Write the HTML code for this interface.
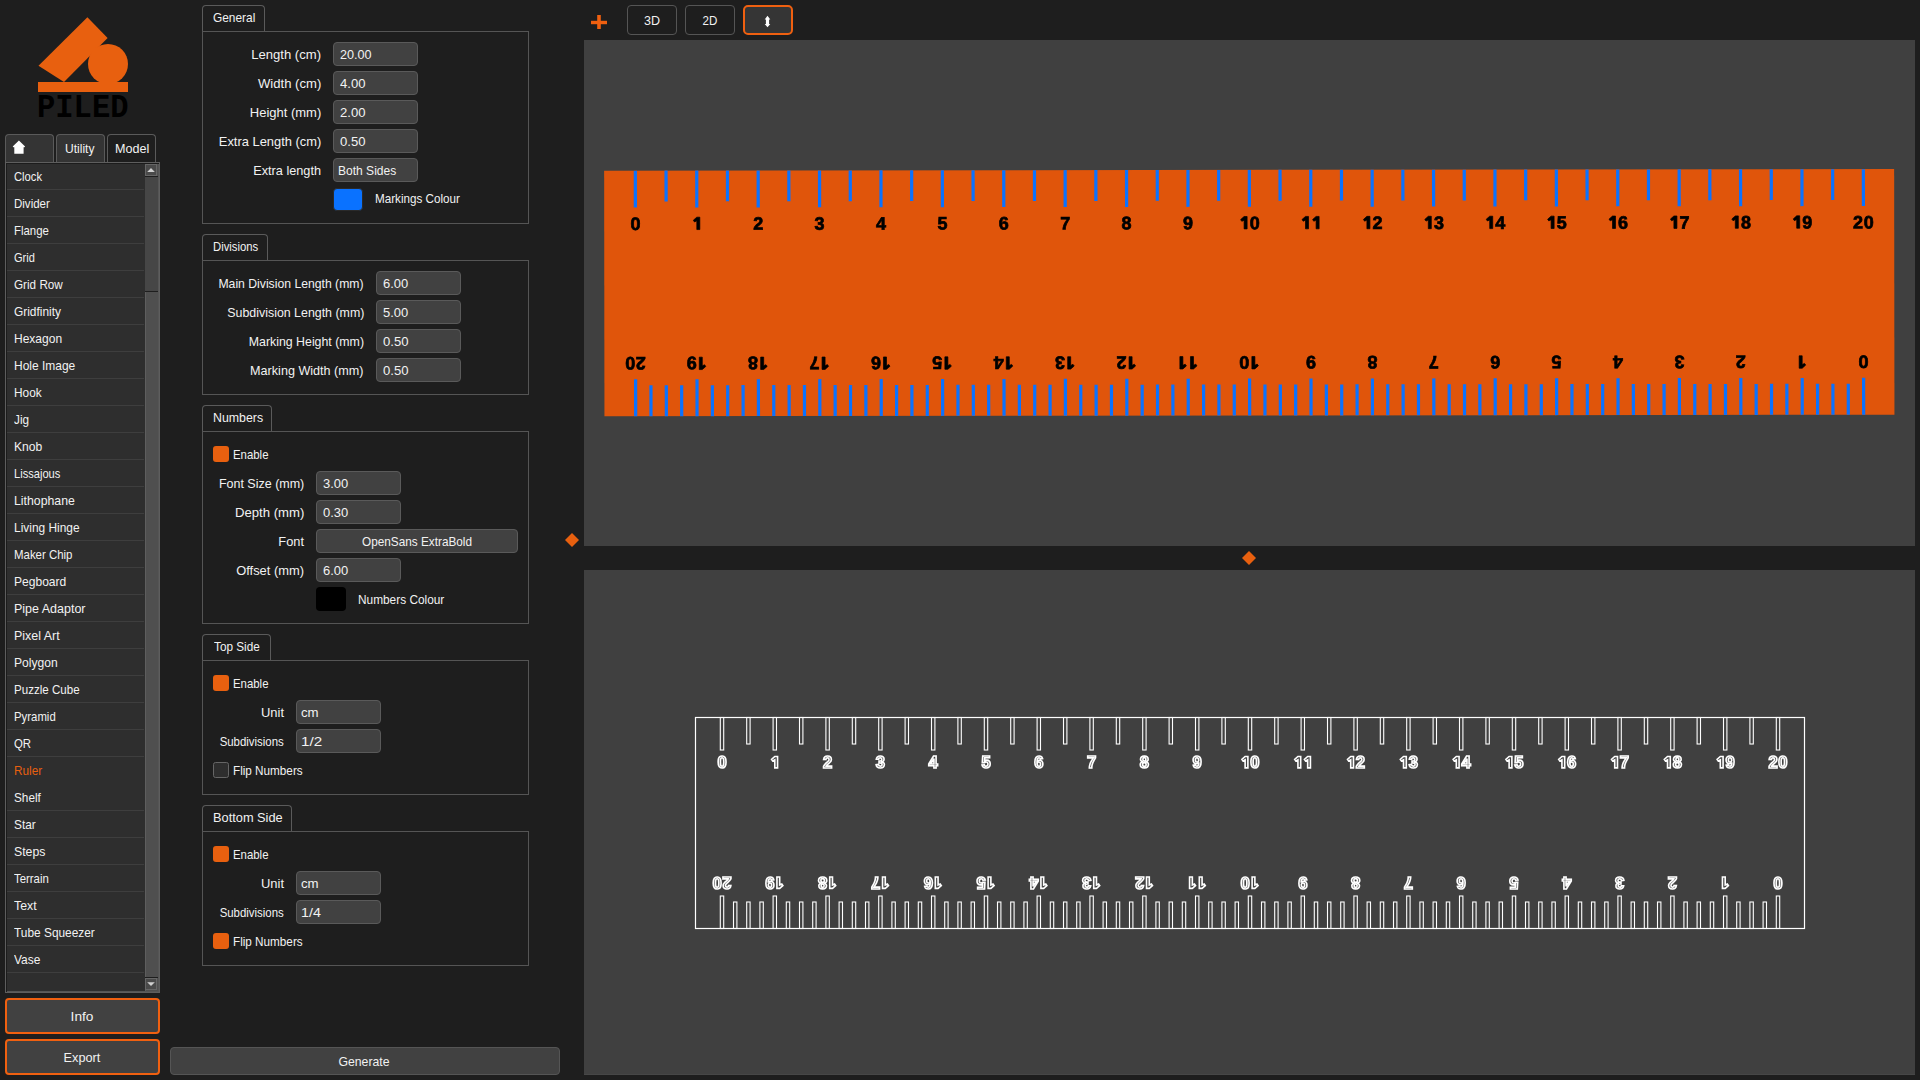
<!DOCTYPE html><html><head><meta charset="utf-8"><style>
*{margin:0;padding:0;box-sizing:border-box}
html,body{width:1920px;height:1080px;overflow:hidden;background:#1e1e1e;font-family:"Liberation Sans",sans-serif;color:#f2f2f2;font-size:13.5px}
.a{position:absolute}
.t{position:absolute;white-space:nowrap;line-height:20px}
.tab{position:absolute;background:#1e1e1e;border:1px solid #5a5a5a;border-bottom:none;border-radius:4px 4px 0 0}
.box{position:absolute;border:1px solid #555}
.inp{position:absolute;background:#414141;border:1px solid #5a5a5a;border-radius:4px;height:24px}
.chk{position:absolute;width:16px;height:16px;border-radius:3px;background:#e8600f}
.chk.off{background:#2e2e2e;border:1px solid #666;border-radius:2.5px}
.sep{position:absolute;left:7px;width:137px;height:1px;background:#3e3e3e}
</style></head><body>
<svg class="a" style="left:0;top:0" width="170" height="130" viewBox="0 0 170 130">
<polygon points="38.5,65.7 87.4,17.2 107.6,38 64,82" fill="#e8600f"/>
<circle cx="108" cy="64" r="20" fill="#e8600f"/>
<rect x="38" y="82" width="90" height="10" fill="#e8600f"/>
<text x="37" y="116.6" font-family="Liberation Mono" font-weight="bold" font-size="32.5" fill="#000" textLength="91.5" lengthAdjust="spacingAndGlyphs">PILED</text>
</svg>
<div class="a" style="left:5px;top:134px;width:49px;height:29px;background:#343434;border:1px solid #5a5a5a;border-bottom:none;border-radius:4px 4px 0 0"></div>
<svg class="a" style="left:0;top:130px" width="40" height="30" viewBox="0 130 40 30"><path d="M18.9 140.6 L25.1 146.6 L24.4 147.3 L23.6 147.3 L23.6 153.7 L14.3 153.7 L14.3 147.3 L13.4 147.3 L12.7 146.6 Z" fill="#fff"/></svg>
<div class="a" style="left:56px;top:134px;width:49px;height:29px;background:#343434;border:1px solid #5a5a5a;border-bottom:none;border-radius:4px 4px 0 0"></div>
<div class="t" style="left:65px;top:139.32px;transform:scaleX(0.8936);transform-origin:0 0;" id="t0">Utility</div>
<div class="a" style="left:107px;top:134px;width:49px;height:29px;background:#1e1e1e;border:1px solid #5a5a5a;border-bottom:none;border-radius:4px 4px 0 0"></div>
<div class="t" style="left:115px;top:139.32px;transform:scaleX(0.9305);transform-origin:0 0;" id="t1">Model</div>
<div class="a" style="left:5px;top:162px;width:155px;height:831px;background:#2e2e2e;border:1px solid #5e5e5e;box-shadow:inset 1px 1px 0 #1c1c1c, inset -1px -1px 0 #555"></div>
<div class="t" style="left:14px;top:166.82px;transform:scaleX(0.8315);transform-origin:0 0;" id="t2">Clock</div>
<div class="sep" style="top:189px"></div>
<div class="t" style="left:14px;top:193.82px;transform:scaleX(0.8528);transform-origin:0 0;" id="t3">Divider</div>
<div class="sep" style="top:216px"></div>
<div class="t" style="left:14px;top:220.82px;transform:scaleX(0.8461);transform-origin:0 0;" id="t4">Flange</div>
<div class="sep" style="top:243px"></div>
<div class="t" style="left:14px;top:247.82px;transform:scaleX(0.8175);transform-origin:0 0;" id="t5">Grid</div>
<div class="sep" style="top:270px"></div>
<div class="t" style="left:14px;top:274.82px;transform:scaleX(0.8674);transform-origin:0 0;" id="t6">Grid Row</div>
<div class="sep" style="top:297px"></div>
<div class="t" style="left:14px;top:301.82px;transform:scaleX(0.8807);transform-origin:0 0;" id="t7">Gridfinity</div>
<div class="sep" style="top:324px"></div>
<div class="t" style="left:14px;top:328.82px;transform:scaleX(0.89);transform-origin:0 0;" id="t8">Hexagon</div>
<div class="sep" style="top:351px"></div>
<div class="t" style="left:14px;top:355.82px;transform:scaleX(0.8867);transform-origin:0 0;" id="t9">Hole Image</div>
<div class="sep" style="top:378px"></div>
<div class="t" style="left:14px;top:382.82px;transform:scaleX(0.8769);transform-origin:0 0;" id="t10">Hook</div>
<div class="sep" style="top:405px"></div>
<div class="t" style="left:14px;top:409.82px;transform:scaleX(0.8704);transform-origin:0 0;" id="t11">Jig</div>
<div class="sep" style="top:432px"></div>
<div class="t" style="left:14px;top:436.82px;transform:scaleX(0.8978);transform-origin:0 0;" id="t12">Knob</div>
<div class="sep" style="top:459px"></div>
<div class="t" style="left:14px;top:463.82px;transform:scaleX(0.8233);transform-origin:0 0;" id="t13">Lissajous</div>
<div class="sep" style="top:486px"></div>
<div class="t" style="left:14px;top:490.82px;transform:scaleX(0.9107);transform-origin:0 0;" id="t14">Lithophane</div>
<div class="sep" style="top:513px"></div>
<div class="t" style="left:14px;top:517.82px;transform:scaleX(0.8831);transform-origin:0 0;" id="t15">Living Hinge</div>
<div class="sep" style="top:540px"></div>
<div class="t" style="left:14px;top:544.82px;transform:scaleX(0.8473);transform-origin:0 0;" id="t16">Maker Chip</div>
<div class="sep" style="top:567px"></div>
<div class="t" style="left:14px;top:571.82px;transform:scaleX(0.8922);transform-origin:0 0;" id="t17">Pegboard</div>
<div class="sep" style="top:594px"></div>
<div class="t" style="left:14px;top:598.82px;transform:scaleX(0.9253);transform-origin:0 0;" id="t18">Pipe Adaptor</div>
<div class="sep" style="top:621px"></div>
<div class="t" style="left:14px;top:625.82px;transform:scaleX(0.9229);transform-origin:0 0;" id="t19">Pixel Art</div>
<div class="sep" style="top:648px"></div>
<div class="t" style="left:14px;top:652.82px;transform:scaleX(0.8958);transform-origin:0 0;" id="t20">Polygon</div>
<div class="sep" style="top:675px"></div>
<div class="t" style="left:14px;top:679.82px;transform:scaleX(0.8567);transform-origin:0 0;" id="t21">Puzzle Cube</div>
<div class="sep" style="top:702px"></div>
<div class="t" style="left:14px;top:706.82px;transform:scaleX(0.8425);transform-origin:0 0;" id="t22">Pyramid</div>
<div class="sep" style="top:729px"></div>
<div class="t" style="left:14px;top:733.82px;transform:scaleX(0.8444);transform-origin:0 0;" id="t23">QR</div>
<div class="sep" style="top:756px"></div>
<div class="t" style="left:14px;top:760.82px;color:#e8600f;transform:scaleX(0.8722);transform-origin:0 0;" id="t24">Ruler</div>
<div class="t" style="left:14px;top:787.82px;transform:scaleX(0.8722);transform-origin:0 0;" id="t25">Shelf</div>
<div class="sep" style="top:810px"></div>
<div class="t" style="left:14px;top:814.82px;transform:scaleX(0.875);transform-origin:0 0;" id="t26">Star</div>
<div class="sep" style="top:837px"></div>
<div class="t" style="left:14px;top:841.82px;transform:scaleX(0.9102);transform-origin:0 0;" id="t27">Steps</div>
<div class="sep" style="top:864px"></div>
<div class="t" style="left:14px;top:868.82px;transform:scaleX(0.8435);transform-origin:0 0;" id="t28">Terrain</div>
<div class="sep" style="top:891px"></div>
<div class="t" style="left:14px;top:895.82px;transform:scaleX(0.9114);transform-origin:0 0;" id="t29">Text</div>
<div class="sep" style="top:918px"></div>
<div class="t" style="left:14px;top:922.82px;transform:scaleX(0.8804);transform-origin:0 0;" id="t30">Tube Squeezer</div>
<div class="sep" style="top:945px"></div>
<div class="t" style="left:14px;top:949.82px;transform:scaleX(0.8852);transform-origin:0 0;" id="t31">Vase</div>
<div class="sep" style="top:972px"></div>
<div class="a" style="left:145px;top:164px;width:13px;height:827px;background:#4f4f4f;border-left:1px solid #5e5e5e"></div>
<div class="a" style="left:145px;top:176px;width:13px;height:116px;background:#464646;border-top:1px solid #1e1e1e;border-bottom:1px solid #1e1e1e"></div>
<div class="a" style="left:145px;top:164px;width:12px;height:12px;background:#4a4a4a;border:1px solid #666"></div>
<svg class="a" style="left:140px;top:160px" width="20" height="20" viewBox="140 160 20 20"><path d="M147.2 171.9 L151 168.1 L154.8 171.9 Z" fill="#d0d0d0"/></svg>
<div class="a" style="left:145px;top:978px;width:12px;height:12px;background:#4a4a4a;border:1px solid #666"></div>
<svg class="a" style="left:140px;top:970px" width="20" height="25" viewBox="140 970 20 25"><path d="M147.2 982.2 L151 986 L154.8 982.2 Z" fill="#d0d0d0"/></svg>
<div class="a" style="left:145px;top:977px;width:13px;height:1px;background:#1e1e1e"></div>
<div class="a" style="left:5px;top:998px;width:155px;height:36px;background:#414141;border:2px solid #f06010;border-radius:4px"></div>
<div class="t" style="left:82px;top:1006.82px;transform:scaleX(1.0132) translateX(-50%);transform-origin:0 0;" id="t32">Info</div>
<div class="a" style="left:5px;top:1039px;width:155px;height:36px;background:#414141;border:2px solid #f06010;border-radius:4px"></div>
<div class="t" style="left:82px;top:1047.82px;transform:scaleX(0.9428) translateX(-50%);transform-origin:0 0;" id="t33">Export</div>
<div class="tab" style="left:202px;top:5px;width:63px;height:27px"></div>
<div class="t" style="left:213px;top:7.92px;transform:scaleX(0.8813);transform-origin:0 0;" id="t34">General</div>
<div class="box" style="left:202px;top:31px;width:327px;height:193px"></div>
<div class="t" style="right:1599px;top:44.82px;transform:scaleX(0.9695);transform-origin:100% 0;" id="t35">Length (cm)</div>
<div class="inp" style="left:333px;top:42px;width:85px"></div>
<div class="t" style="left:340px;top:44.82px;transform:scaleX(0.9333);transform-origin:0 0;" id="t36">20.00</div>
<div class="t" style="right:1599px;top:73.82px;transform:scaleX(0.9702);transform-origin:100% 0;" id="t37">Width (cm)</div>
<div class="inp" style="left:333px;top:71px;width:85px"></div>
<div class="t" style="left:340px;top:73.82px;transform:scaleX(0.9704);transform-origin:0 0;" id="t38">4.00</div>
<div class="t" style="right:1599px;top:102.82px;transform:scaleX(0.9626);transform-origin:100% 0;" id="t39">Height (mm)</div>
<div class="inp" style="left:333px;top:100px;width:85px"></div>
<div class="t" style="left:340px;top:102.82px;transform:scaleX(0.9704);transform-origin:0 0;" id="t40">2.00</div>
<div class="t" style="right:1599px;top:131.82px;transform:scaleX(0.955);transform-origin:100% 0;" id="t41">Extra Length (cm)</div>
<div class="inp" style="left:333px;top:129px;width:85px"></div>
<div class="t" style="left:340px;top:131.82px;transform:scaleX(0.9704);transform-origin:0 0;" id="t42">0.50</div>
<div class="t" style="right:1599px;top:160.82px;transform:scaleX(0.9417);transform-origin:100% 0;" id="t43">Extra length</div>
<div class="inp" style="left:333px;top:158px;width:85px"></div>
<div class="t" style="left:338px;top:160.82px;transform:scaleX(0.8919);transform-origin:0 0;" id="t44">Both Sides</div>
<div class="a" style="left:333px;top:188px;width:30px;height:23px;background:#0a72ff;border-radius:4px;border:1px solid #2a2a2a"></div>
<div class="t" style="left:375px;top:189.32px;transform:scaleX(0.8628);transform-origin:0 0;" id="t45">Markings Colour</div>
<div class="tab" style="left:202px;top:234px;width:66px;height:27px"></div>
<div class="t" style="left:213px;top:236.92px;transform:scaleX(0.8378);transform-origin:0 0;" id="t46">Divisions</div>
<div class="box" style="left:202px;top:260px;width:327px;height:135px"></div>
<div class="t" style="right:1556px;top:273.82px;transform:scaleX(0.9039);transform-origin:100% 0;" id="t47">Main Division Length (mm)</div>
<div class="inp" style="left:376px;top:271px;width:85px"></div>
<div class="t" style="left:383px;top:273.82px;transform:scaleX(0.9591);transform-origin:0 0;" id="t48">6.00</div>
<div class="t" style="right:1556px;top:302.82px;transform:scaleX(0.9175);transform-origin:100% 0;" id="t49">Subdivision Length (mm)</div>
<div class="inp" style="left:376px;top:300px;width:85px"></div>
<div class="t" style="left:383px;top:302.82px;transform:scaleX(0.9591);transform-origin:0 0;" id="t50">5.00</div>
<div class="t" style="right:1556px;top:331.82px;transform:scaleX(0.9148);transform-origin:100% 0;" id="t51">Marking Height (mm)</div>
<div class="inp" style="left:376px;top:329px;width:85px"></div>
<div class="t" style="left:383px;top:331.82px;transform:scaleX(0.9704);transform-origin:0 0;" id="t52">0.50</div>
<div class="t" style="right:1556px;top:360.82px;transform:scaleX(0.9333);transform-origin:100% 0;" id="t53">Marking Width (mm)</div>
<div class="inp" style="left:376px;top:358px;width:85px"></div>
<div class="t" style="left:383px;top:360.82px;transform:scaleX(0.9704);transform-origin:0 0;" id="t54">0.50</div>
<div class="tab" style="left:202px;top:405px;width:70px;height:27px"></div>
<div class="t" style="left:213px;top:407.92px;transform:scaleX(0.9157);transform-origin:0 0;" id="t55">Numbers</div>
<div class="box" style="left:202px;top:431px;width:327px;height:193px"></div>
<div class="chk" style="left:213px;top:446px"></div>
<div class="t" style="left:233px;top:444.82px;transform:scaleX(0.8442);transform-origin:0 0;" id="t56">Enable</div>
<div class="t" style="right:1616px;top:473.82px;transform:scaleX(0.9253);transform-origin:100% 0;" id="t57">Font Size (mm)</div>
<div class="inp" style="left:316px;top:471px;width:85px"></div>
<div class="t" style="left:323px;top:473.82px;transform:scaleX(0.9591);transform-origin:0 0;" id="t58">3.00</div>
<div class="t" style="right:1616px;top:502.82px;transform:scaleX(0.9725);transform-origin:100% 0;" id="t59">Depth (mm)</div>
<div class="inp" style="left:316px;top:500px;width:85px"></div>
<div class="t" style="left:323px;top:502.82px;transform:scaleX(0.9591);transform-origin:0 0;" id="t60">0.30</div>
<div class="t" style="right:1616px;top:560.82px;transform:scaleX(0.9555);transform-origin:100% 0;" id="t61">Offset (mm)</div>
<div class="inp" style="left:316px;top:558px;width:85px"></div>
<div class="t" style="left:323px;top:560.82px;transform:scaleX(0.9591);transform-origin:0 0;" id="t62">6.00</div>
<div class="t" style="right:1616px;top:531.82px;transform:scaleX(0.9511);transform-origin:100% 0;" id="t63">Font</div>
<div class="inp" style="left:316px;top:529px;width:202px"></div>
<div class="t" style="left:417.0px;top:531.82px;transform:scaleX(0.8726) translateX(-50%);transform-origin:0 0;" id="t64">OpenSans ExtraBold</div>
<div class="a" style="left:316px;top:587px;width:30px;height:24px;background:#000;border-radius:4px"></div>
<div class="t" style="left:358px;top:589.82px;transform:scaleX(0.878);transform-origin:0 0;" id="t65">Numbers Colour</div>
<div class="tab" style="left:202px;top:634px;width:69px;height:27px"></div>
<div class="t" style="left:214px;top:636.92px;transform:scaleX(0.8714);transform-origin:0 0;" id="t66">Top Side</div>
<div class="box" style="left:202px;top:660px;width:327px;height:135px"></div>
<div class="chk" style="left:213px;top:675px"></div>
<div class="t" style="left:233px;top:673.82px;transform:scaleX(0.8442);transform-origin:0 0;" id="t67">Enable</div>
<div class="t" style="right:1636px;top:702.82px;transform:scaleX(0.9612);transform-origin:100% 0;" id="t68">Unit</div>
<div class="inp" style="left:296px;top:700px;width:85px"></div>
<div class="t" style="left:301px;top:702.82px;transform:scaleX(0.9798);transform-origin:0 0;" id="t69">cm</div>
<div class="t" style="right:1636px;top:731.82px;transform:scaleX(0.8464);transform-origin:100% 0;" id="t70">Subdivisions</div>
<div class="inp" style="left:296px;top:729px;width:85px"></div>
<div class="t" style="left:301px;top:731.82px;transform:scaleX(1.1269);transform-origin:0 0;" id="t71">1/2</div>
<div class="chk off" style="left:213px;top:762px"></div>
<div class="t" style="left:233px;top:760.82px;transform:scaleX(0.8675);transform-origin:0 0;" id="t72">Flip Numbers</div>
<div class="tab" style="left:202px;top:805px;width:90px;height:27px"></div>
<div class="t" style="left:213px;top:807.92px;transform:scaleX(0.9478);transform-origin:0 0;" id="t73">Bottom Side</div>
<div class="box" style="left:202px;top:831px;width:327px;height:135px"></div>
<div class="chk" style="left:213px;top:846px"></div>
<div class="t" style="left:233px;top:844.82px;transform:scaleX(0.8442);transform-origin:0 0;" id="t74">Enable</div>
<div class="t" style="right:1636px;top:873.82px;transform:scaleX(0.9612);transform-origin:100% 0;" id="t75">Unit</div>
<div class="inp" style="left:296px;top:871px;width:85px"></div>
<div class="t" style="left:301px;top:873.82px;transform:scaleX(0.9798);transform-origin:0 0;" id="t76">cm</div>
<div class="t" style="right:1636px;top:902.82px;transform:scaleX(0.8464);transform-origin:100% 0;" id="t77">Subdivisions</div>
<div class="inp" style="left:296px;top:900px;width:85px"></div>
<div class="t" style="left:301px;top:902.82px;transform:scaleX(1.0606);transform-origin:0 0;" id="t78">1/4</div>
<div class="chk" style="left:213px;top:933px"></div>
<div class="t" style="left:233px;top:931.82px;transform:scaleX(0.8675);transform-origin:0 0;" id="t79">Flip Numbers</div>
<div class="a" style="left:170px;top:1047px;width:390px;height:28px;background:#414141;border:1px solid #555;border-radius:4px"></div>
<div class="t" style="left:364px;top:1051.82px;transform:scaleX(0.9069) translateX(-50%);transform-origin:0 0;" id="t80">Generate</div>
<svg class="a" style="left:0;top:0" width="620" height="40"><rect x="591" y="20.8" width="16" height="3.4" fill="#f06010"/><rect x="597.2" y="15" width="3.6" height="14" fill="#f06010"/></svg>
<div class="a" style="left:627px;top:5px;width:50px;height:30px;background:#1e1e1e;border:1px solid #555;border-radius:4px"></div>
<div class="t" style="left:652px;top:11.32px;transform:scaleX(0.9268) translateX(-50%);transform-origin:0 0;" id="t81">3D</div>
<div class="a" style="left:685px;top:5px;width:50px;height:30px;background:#1e1e1e;border:1px solid #555;border-radius:4px"></div>
<div class="t" style="left:710px;top:11.32px;transform:scaleX(0.8574) translateX(-50%);transform-origin:0 0;" id="t82">2D</div>
<div class="a" style="left:743px;top:5px;width:50px;height:30px;background:#353535;border:2px solid #f06010;border-radius:5px"></div>
<svg class="a" style="left:740px;top:0" width="60" height="40"><path d="M27.5 15.8 L30.3 19.4 L29.1 19.4 L29.1 23.9 L30.3 23.9 L27.5 27.3 L24.7 23.9 L25.9 23.9 L25.9 19.4 L24.7 19.4 Z" fill="#fff"/></svg>
<div class="a" style="left:584px;top:40px;width:1331px;height:506px;background:#404040"></div>
<div class="a" style="left:584px;top:570px;width:1331px;height:505px;background:#404040;border-bottom:1px solid #474747"></div>
<div class="a" style="left:1915px;top:0;width:5px;height:1080px;background:#1e1e1e"></div>
<svg class="a" style="left:564px;top:532px" width="16" height="16"><path d="M8 1 L15 8 L8 15 L1 8 Z" fill="#e8600f"/></svg>
<svg class="a" style="left:1241px;top:550px" width="16" height="16"><path d="M8 1 L15 8 L8 15 L1 8 Z" fill="#e8600f"/></svg>
<svg class="a" style="left:0;top:0;will-change:transform" width="1920" height="1080"><g transform="rotate(-0.07 1249 293)"><rect x="604.3" y="169.9" width="1290" height="245.6" fill="#e0550b"/><rect x="633.90" y="169.9" width="3.2" height="36.9" fill="#0a72ff"/><rect x="664.60" y="169.9" width="3.2" height="30.8" fill="#0a72ff"/><rect x="695.30" y="169.9" width="3.2" height="36.9" fill="#0a72ff"/><rect x="726.00" y="169.9" width="3.2" height="30.8" fill="#0a72ff"/><rect x="756.70" y="169.9" width="3.2" height="36.9" fill="#0a72ff"/><rect x="787.40" y="169.9" width="3.2" height="30.8" fill="#0a72ff"/><rect x="818.10" y="169.9" width="3.2" height="36.9" fill="#0a72ff"/><rect x="848.80" y="169.9" width="3.2" height="30.8" fill="#0a72ff"/><rect x="879.50" y="169.9" width="3.2" height="36.9" fill="#0a72ff"/><rect x="910.20" y="169.9" width="3.2" height="30.8" fill="#0a72ff"/><rect x="940.90" y="169.9" width="3.2" height="36.9" fill="#0a72ff"/><rect x="971.60" y="169.9" width="3.2" height="30.8" fill="#0a72ff"/><rect x="1002.30" y="169.9" width="3.2" height="36.9" fill="#0a72ff"/><rect x="1033.00" y="169.9" width="3.2" height="30.8" fill="#0a72ff"/><rect x="1063.70" y="169.9" width="3.2" height="36.9" fill="#0a72ff"/><rect x="1094.40" y="169.9" width="3.2" height="30.8" fill="#0a72ff"/><rect x="1125.10" y="169.9" width="3.2" height="36.9" fill="#0a72ff"/><rect x="1155.80" y="169.9" width="3.2" height="30.8" fill="#0a72ff"/><rect x="1186.50" y="169.9" width="3.2" height="36.9" fill="#0a72ff"/><rect x="1217.20" y="169.9" width="3.2" height="30.8" fill="#0a72ff"/><rect x="1247.90" y="169.9" width="3.2" height="36.9" fill="#0a72ff"/><rect x="1278.60" y="169.9" width="3.2" height="30.8" fill="#0a72ff"/><rect x="1309.30" y="169.9" width="3.2" height="36.9" fill="#0a72ff"/><rect x="1340.00" y="169.9" width="3.2" height="30.8" fill="#0a72ff"/><rect x="1370.70" y="169.9" width="3.2" height="36.9" fill="#0a72ff"/><rect x="1401.40" y="169.9" width="3.2" height="30.8" fill="#0a72ff"/><rect x="1432.10" y="169.9" width="3.2" height="36.9" fill="#0a72ff"/><rect x="1462.80" y="169.9" width="3.2" height="30.8" fill="#0a72ff"/><rect x="1493.50" y="169.9" width="3.2" height="36.9" fill="#0a72ff"/><rect x="1524.20" y="169.9" width="3.2" height="30.8" fill="#0a72ff"/><rect x="1554.90" y="169.9" width="3.2" height="36.9" fill="#0a72ff"/><rect x="1585.60" y="169.9" width="3.2" height="30.8" fill="#0a72ff"/><rect x="1616.30" y="169.9" width="3.2" height="36.9" fill="#0a72ff"/><rect x="1647.00" y="169.9" width="3.2" height="30.8" fill="#0a72ff"/><rect x="1677.70" y="169.9" width="3.2" height="36.9" fill="#0a72ff"/><rect x="1708.40" y="169.9" width="3.2" height="30.8" fill="#0a72ff"/><rect x="1739.10" y="169.9" width="3.2" height="36.9" fill="#0a72ff"/><rect x="1769.80" y="169.9" width="3.2" height="30.8" fill="#0a72ff"/><rect x="1800.50" y="169.9" width="3.2" height="36.9" fill="#0a72ff"/><rect x="1831.20" y="169.9" width="3.2" height="30.8" fill="#0a72ff"/><rect x="1861.90" y="169.9" width="3.2" height="36.9" fill="#0a72ff"/><rect x="633.90" y="378.6" width="3.2" height="36.90" fill="#0a72ff"/><rect x="649.25" y="384.5" width="3.2" height="31.00" fill="#0a72ff"/><rect x="664.60" y="384.5" width="3.2" height="31.00" fill="#0a72ff"/><rect x="679.95" y="384.5" width="3.2" height="31.00" fill="#0a72ff"/><rect x="695.30" y="378.6" width="3.2" height="36.90" fill="#0a72ff"/><rect x="710.65" y="384.5" width="3.2" height="31.00" fill="#0a72ff"/><rect x="726.00" y="384.5" width="3.2" height="31.00" fill="#0a72ff"/><rect x="741.35" y="384.5" width="3.2" height="31.00" fill="#0a72ff"/><rect x="756.70" y="378.6" width="3.2" height="36.90" fill="#0a72ff"/><rect x="772.05" y="384.5" width="3.2" height="31.00" fill="#0a72ff"/><rect x="787.40" y="384.5" width="3.2" height="31.00" fill="#0a72ff"/><rect x="802.75" y="384.5" width="3.2" height="31.00" fill="#0a72ff"/><rect x="818.10" y="378.6" width="3.2" height="36.90" fill="#0a72ff"/><rect x="833.45" y="384.5" width="3.2" height="31.00" fill="#0a72ff"/><rect x="848.80" y="384.5" width="3.2" height="31.00" fill="#0a72ff"/><rect x="864.15" y="384.5" width="3.2" height="31.00" fill="#0a72ff"/><rect x="879.50" y="378.6" width="3.2" height="36.90" fill="#0a72ff"/><rect x="894.85" y="384.5" width="3.2" height="31.00" fill="#0a72ff"/><rect x="910.20" y="384.5" width="3.2" height="31.00" fill="#0a72ff"/><rect x="925.55" y="384.5" width="3.2" height="31.00" fill="#0a72ff"/><rect x="940.90" y="378.6" width="3.2" height="36.90" fill="#0a72ff"/><rect x="956.25" y="384.5" width="3.2" height="31.00" fill="#0a72ff"/><rect x="971.60" y="384.5" width="3.2" height="31.00" fill="#0a72ff"/><rect x="986.95" y="384.5" width="3.2" height="31.00" fill="#0a72ff"/><rect x="1002.30" y="378.6" width="3.2" height="36.90" fill="#0a72ff"/><rect x="1017.65" y="384.5" width="3.2" height="31.00" fill="#0a72ff"/><rect x="1033.00" y="384.5" width="3.2" height="31.00" fill="#0a72ff"/><rect x="1048.35" y="384.5" width="3.2" height="31.00" fill="#0a72ff"/><rect x="1063.70" y="378.6" width="3.2" height="36.90" fill="#0a72ff"/><rect x="1079.05" y="384.5" width="3.2" height="31.00" fill="#0a72ff"/><rect x="1094.40" y="384.5" width="3.2" height="31.00" fill="#0a72ff"/><rect x="1109.75" y="384.5" width="3.2" height="31.00" fill="#0a72ff"/><rect x="1125.10" y="378.6" width="3.2" height="36.90" fill="#0a72ff"/><rect x="1140.45" y="384.5" width="3.2" height="31.00" fill="#0a72ff"/><rect x="1155.80" y="384.5" width="3.2" height="31.00" fill="#0a72ff"/><rect x="1171.15" y="384.5" width="3.2" height="31.00" fill="#0a72ff"/><rect x="1186.50" y="378.6" width="3.2" height="36.90" fill="#0a72ff"/><rect x="1201.85" y="384.5" width="3.2" height="31.00" fill="#0a72ff"/><rect x="1217.20" y="384.5" width="3.2" height="31.00" fill="#0a72ff"/><rect x="1232.55" y="384.5" width="3.2" height="31.00" fill="#0a72ff"/><rect x="1247.90" y="378.6" width="3.2" height="36.90" fill="#0a72ff"/><rect x="1263.25" y="384.5" width="3.2" height="31.00" fill="#0a72ff"/><rect x="1278.60" y="384.5" width="3.2" height="31.00" fill="#0a72ff"/><rect x="1293.95" y="384.5" width="3.2" height="31.00" fill="#0a72ff"/><rect x="1309.30" y="378.6" width="3.2" height="36.90" fill="#0a72ff"/><rect x="1324.65" y="384.5" width="3.2" height="31.00" fill="#0a72ff"/><rect x="1340.00" y="384.5" width="3.2" height="31.00" fill="#0a72ff"/><rect x="1355.35" y="384.5" width="3.2" height="31.00" fill="#0a72ff"/><rect x="1370.70" y="378.6" width="3.2" height="36.90" fill="#0a72ff"/><rect x="1386.05" y="384.5" width="3.2" height="31.00" fill="#0a72ff"/><rect x="1401.40" y="384.5" width="3.2" height="31.00" fill="#0a72ff"/><rect x="1416.75" y="384.5" width="3.2" height="31.00" fill="#0a72ff"/><rect x="1432.10" y="378.6" width="3.2" height="36.90" fill="#0a72ff"/><rect x="1447.45" y="384.5" width="3.2" height="31.00" fill="#0a72ff"/><rect x="1462.80" y="384.5" width="3.2" height="31.00" fill="#0a72ff"/><rect x="1478.15" y="384.5" width="3.2" height="31.00" fill="#0a72ff"/><rect x="1493.50" y="378.6" width="3.2" height="36.90" fill="#0a72ff"/><rect x="1508.85" y="384.5" width="3.2" height="31.00" fill="#0a72ff"/><rect x="1524.20" y="384.5" width="3.2" height="31.00" fill="#0a72ff"/><rect x="1539.55" y="384.5" width="3.2" height="31.00" fill="#0a72ff"/><rect x="1554.90" y="378.6" width="3.2" height="36.90" fill="#0a72ff"/><rect x="1570.25" y="384.5" width="3.2" height="31.00" fill="#0a72ff"/><rect x="1585.60" y="384.5" width="3.2" height="31.00" fill="#0a72ff"/><rect x="1600.95" y="384.5" width="3.2" height="31.00" fill="#0a72ff"/><rect x="1616.30" y="378.6" width="3.2" height="36.90" fill="#0a72ff"/><rect x="1631.65" y="384.5" width="3.2" height="31.00" fill="#0a72ff"/><rect x="1647.00" y="384.5" width="3.2" height="31.00" fill="#0a72ff"/><rect x="1662.35" y="384.5" width="3.2" height="31.00" fill="#0a72ff"/><rect x="1677.70" y="378.6" width="3.2" height="36.90" fill="#0a72ff"/><rect x="1693.05" y="384.5" width="3.2" height="31.00" fill="#0a72ff"/><rect x="1708.40" y="384.5" width="3.2" height="31.00" fill="#0a72ff"/><rect x="1723.75" y="384.5" width="3.2" height="31.00" fill="#0a72ff"/><rect x="1739.10" y="378.6" width="3.2" height="36.90" fill="#0a72ff"/><rect x="1754.45" y="384.5" width="3.2" height="31.00" fill="#0a72ff"/><rect x="1769.80" y="384.5" width="3.2" height="31.00" fill="#0a72ff"/><rect x="1785.15" y="384.5" width="3.2" height="31.00" fill="#0a72ff"/><rect x="1800.50" y="378.6" width="3.2" height="36.90" fill="#0a72ff"/><rect x="1815.85" y="384.5" width="3.2" height="31.00" fill="#0a72ff"/><rect x="1831.20" y="384.5" width="3.2" height="31.00" fill="#0a72ff"/><rect x="1846.55" y="384.5" width="3.2" height="31.00" fill="#0a72ff"/><rect x="1861.90" y="378.6" width="3.2" height="36.90" fill="#0a72ff"/><g transform="translate(635.50,222.70)" font-family="Liberation Sans" font-weight="bold" font-size="18" fill="#000" stroke="#000" stroke-width="0.7"><text x="0.00" y="6.5" text-anchor="middle">0</text></g><g transform="translate(635.50,362.70) rotate(180)" font-family="Liberation Sans" font-weight="bold" font-size="18" fill="#000" stroke="#000" stroke-width="0.7"><text x="-5.30" y="6.5" text-anchor="middle">2</text><text x="5.30" y="6.5" text-anchor="middle">0</text></g><g transform="translate(696.90,222.70)" font-family="Liberation Sans" font-weight="bold" font-size="18" fill="#000" stroke="#000" stroke-width="0.7"><path transform="translate(-5.30,6.5)" d="M5.3 -12.7 L8.3 -12.7 L8.3 -0.3 L5.3 -0.3 L5.3 -9.0 L3.0 -7.9 L1.8 -9.6 Z"/></g><g transform="translate(696.90,362.70) rotate(180)" font-family="Liberation Sans" font-weight="bold" font-size="18" fill="#000" stroke="#000" stroke-width="0.7"><path transform="translate(-10.60,6.5)" d="M5.3 -12.7 L8.3 -12.7 L8.3 -0.3 L5.3 -0.3 L5.3 -9.0 L3.0 -7.9 L1.8 -9.6 Z"/><text x="5.30" y="6.5" text-anchor="middle">9</text></g><g transform="translate(758.30,222.70)" font-family="Liberation Sans" font-weight="bold" font-size="18" fill="#000" stroke="#000" stroke-width="0.7"><text x="0.00" y="6.5" text-anchor="middle">2</text></g><g transform="translate(758.30,362.70) rotate(180)" font-family="Liberation Sans" font-weight="bold" font-size="18" fill="#000" stroke="#000" stroke-width="0.7"><path transform="translate(-10.60,6.5)" d="M5.3 -12.7 L8.3 -12.7 L8.3 -0.3 L5.3 -0.3 L5.3 -9.0 L3.0 -7.9 L1.8 -9.6 Z"/><text x="5.30" y="6.5" text-anchor="middle">8</text></g><g transform="translate(819.70,222.70)" font-family="Liberation Sans" font-weight="bold" font-size="18" fill="#000" stroke="#000" stroke-width="0.7"><text x="0.00" y="6.5" text-anchor="middle">3</text></g><g transform="translate(819.70,362.70) rotate(180)" font-family="Liberation Sans" font-weight="bold" font-size="18" fill="#000" stroke="#000" stroke-width="0.7"><path transform="translate(-10.60,6.5)" d="M5.3 -12.7 L8.3 -12.7 L8.3 -0.3 L5.3 -0.3 L5.3 -9.0 L3.0 -7.9 L1.8 -9.6 Z"/><text x="5.30" y="6.5" text-anchor="middle">7</text></g><g transform="translate(881.10,222.70)" font-family="Liberation Sans" font-weight="bold" font-size="18" fill="#000" stroke="#000" stroke-width="0.7"><text x="0.00" y="6.5" text-anchor="middle">4</text></g><g transform="translate(881.10,362.70) rotate(180)" font-family="Liberation Sans" font-weight="bold" font-size="18" fill="#000" stroke="#000" stroke-width="0.7"><path transform="translate(-10.60,6.5)" d="M5.3 -12.7 L8.3 -12.7 L8.3 -0.3 L5.3 -0.3 L5.3 -9.0 L3.0 -7.9 L1.8 -9.6 Z"/><text x="5.30" y="6.5" text-anchor="middle">6</text></g><g transform="translate(942.50,222.70)" font-family="Liberation Sans" font-weight="bold" font-size="18" fill="#000" stroke="#000" stroke-width="0.7"><text x="0.00" y="6.5" text-anchor="middle">5</text></g><g transform="translate(942.50,362.70) rotate(180)" font-family="Liberation Sans" font-weight="bold" font-size="18" fill="#000" stroke="#000" stroke-width="0.7"><path transform="translate(-10.60,6.5)" d="M5.3 -12.7 L8.3 -12.7 L8.3 -0.3 L5.3 -0.3 L5.3 -9.0 L3.0 -7.9 L1.8 -9.6 Z"/><text x="5.30" y="6.5" text-anchor="middle">5</text></g><g transform="translate(1003.90,222.70)" font-family="Liberation Sans" font-weight="bold" font-size="18" fill="#000" stroke="#000" stroke-width="0.7"><text x="0.00" y="6.5" text-anchor="middle">6</text></g><g transform="translate(1003.90,362.70) rotate(180)" font-family="Liberation Sans" font-weight="bold" font-size="18" fill="#000" stroke="#000" stroke-width="0.7"><path transform="translate(-10.60,6.5)" d="M5.3 -12.7 L8.3 -12.7 L8.3 -0.3 L5.3 -0.3 L5.3 -9.0 L3.0 -7.9 L1.8 -9.6 Z"/><text x="5.30" y="6.5" text-anchor="middle">4</text></g><g transform="translate(1065.30,222.70)" font-family="Liberation Sans" font-weight="bold" font-size="18" fill="#000" stroke="#000" stroke-width="0.7"><text x="0.00" y="6.5" text-anchor="middle">7</text></g><g transform="translate(1065.30,362.70) rotate(180)" font-family="Liberation Sans" font-weight="bold" font-size="18" fill="#000" stroke="#000" stroke-width="0.7"><path transform="translate(-10.60,6.5)" d="M5.3 -12.7 L8.3 -12.7 L8.3 -0.3 L5.3 -0.3 L5.3 -9.0 L3.0 -7.9 L1.8 -9.6 Z"/><text x="5.30" y="6.5" text-anchor="middle">3</text></g><g transform="translate(1126.70,222.70)" font-family="Liberation Sans" font-weight="bold" font-size="18" fill="#000" stroke="#000" stroke-width="0.7"><text x="0.00" y="6.5" text-anchor="middle">8</text></g><g transform="translate(1126.70,362.70) rotate(180)" font-family="Liberation Sans" font-weight="bold" font-size="18" fill="#000" stroke="#000" stroke-width="0.7"><path transform="translate(-10.60,6.5)" d="M5.3 -12.7 L8.3 -12.7 L8.3 -0.3 L5.3 -0.3 L5.3 -9.0 L3.0 -7.9 L1.8 -9.6 Z"/><text x="5.30" y="6.5" text-anchor="middle">2</text></g><g transform="translate(1188.10,222.70)" font-family="Liberation Sans" font-weight="bold" font-size="18" fill="#000" stroke="#000" stroke-width="0.7"><text x="0.00" y="6.5" text-anchor="middle">9</text></g><g transform="translate(1188.10,362.70) rotate(180)" font-family="Liberation Sans" font-weight="bold" font-size="18" fill="#000" stroke="#000" stroke-width="0.7"><path transform="translate(-10.60,6.5)" d="M5.3 -12.7 L8.3 -12.7 L8.3 -0.3 L5.3 -0.3 L5.3 -9.0 L3.0 -7.9 L1.8 -9.6 Z"/><path transform="translate(0.00,6.5)" d="M5.3 -12.7 L8.3 -12.7 L8.3 -0.3 L5.3 -0.3 L5.3 -9.0 L3.0 -7.9 L1.8 -9.6 Z"/></g><g transform="translate(1249.50,222.70)" font-family="Liberation Sans" font-weight="bold" font-size="18" fill="#000" stroke="#000" stroke-width="0.7"><path transform="translate(-10.60,6.5)" d="M5.3 -12.7 L8.3 -12.7 L8.3 -0.3 L5.3 -0.3 L5.3 -9.0 L3.0 -7.9 L1.8 -9.6 Z"/><text x="5.30" y="6.5" text-anchor="middle">0</text></g><g transform="translate(1249.50,362.70) rotate(180)" font-family="Liberation Sans" font-weight="bold" font-size="18" fill="#000" stroke="#000" stroke-width="0.7"><path transform="translate(-10.60,6.5)" d="M5.3 -12.7 L8.3 -12.7 L8.3 -0.3 L5.3 -0.3 L5.3 -9.0 L3.0 -7.9 L1.8 -9.6 Z"/><text x="5.30" y="6.5" text-anchor="middle">0</text></g><g transform="translate(1310.90,222.70)" font-family="Liberation Sans" font-weight="bold" font-size="18" fill="#000" stroke="#000" stroke-width="0.7"><path transform="translate(-10.60,6.5)" d="M5.3 -12.7 L8.3 -12.7 L8.3 -0.3 L5.3 -0.3 L5.3 -9.0 L3.0 -7.9 L1.8 -9.6 Z"/><path transform="translate(0.00,6.5)" d="M5.3 -12.7 L8.3 -12.7 L8.3 -0.3 L5.3 -0.3 L5.3 -9.0 L3.0 -7.9 L1.8 -9.6 Z"/></g><g transform="translate(1310.90,362.70) rotate(180)" font-family="Liberation Sans" font-weight="bold" font-size="18" fill="#000" stroke="#000" stroke-width="0.7"><text x="0.00" y="6.5" text-anchor="middle">9</text></g><g transform="translate(1372.30,222.70)" font-family="Liberation Sans" font-weight="bold" font-size="18" fill="#000" stroke="#000" stroke-width="0.7"><path transform="translate(-10.60,6.5)" d="M5.3 -12.7 L8.3 -12.7 L8.3 -0.3 L5.3 -0.3 L5.3 -9.0 L3.0 -7.9 L1.8 -9.6 Z"/><text x="5.30" y="6.5" text-anchor="middle">2</text></g><g transform="translate(1372.30,362.70) rotate(180)" font-family="Liberation Sans" font-weight="bold" font-size="18" fill="#000" stroke="#000" stroke-width="0.7"><text x="0.00" y="6.5" text-anchor="middle">8</text></g><g transform="translate(1433.70,222.70)" font-family="Liberation Sans" font-weight="bold" font-size="18" fill="#000" stroke="#000" stroke-width="0.7"><path transform="translate(-10.60,6.5)" d="M5.3 -12.7 L8.3 -12.7 L8.3 -0.3 L5.3 -0.3 L5.3 -9.0 L3.0 -7.9 L1.8 -9.6 Z"/><text x="5.30" y="6.5" text-anchor="middle">3</text></g><g transform="translate(1433.70,362.70) rotate(180)" font-family="Liberation Sans" font-weight="bold" font-size="18" fill="#000" stroke="#000" stroke-width="0.7"><text x="0.00" y="6.5" text-anchor="middle">7</text></g><g transform="translate(1495.10,222.70)" font-family="Liberation Sans" font-weight="bold" font-size="18" fill="#000" stroke="#000" stroke-width="0.7"><path transform="translate(-10.60,6.5)" d="M5.3 -12.7 L8.3 -12.7 L8.3 -0.3 L5.3 -0.3 L5.3 -9.0 L3.0 -7.9 L1.8 -9.6 Z"/><text x="5.30" y="6.5" text-anchor="middle">4</text></g><g transform="translate(1495.10,362.70) rotate(180)" font-family="Liberation Sans" font-weight="bold" font-size="18" fill="#000" stroke="#000" stroke-width="0.7"><text x="0.00" y="6.5" text-anchor="middle">6</text></g><g transform="translate(1556.50,222.70)" font-family="Liberation Sans" font-weight="bold" font-size="18" fill="#000" stroke="#000" stroke-width="0.7"><path transform="translate(-10.60,6.5)" d="M5.3 -12.7 L8.3 -12.7 L8.3 -0.3 L5.3 -0.3 L5.3 -9.0 L3.0 -7.9 L1.8 -9.6 Z"/><text x="5.30" y="6.5" text-anchor="middle">5</text></g><g transform="translate(1556.50,362.70) rotate(180)" font-family="Liberation Sans" font-weight="bold" font-size="18" fill="#000" stroke="#000" stroke-width="0.7"><text x="0.00" y="6.5" text-anchor="middle">5</text></g><g transform="translate(1617.90,222.70)" font-family="Liberation Sans" font-weight="bold" font-size="18" fill="#000" stroke="#000" stroke-width="0.7"><path transform="translate(-10.60,6.5)" d="M5.3 -12.7 L8.3 -12.7 L8.3 -0.3 L5.3 -0.3 L5.3 -9.0 L3.0 -7.9 L1.8 -9.6 Z"/><text x="5.30" y="6.5" text-anchor="middle">6</text></g><g transform="translate(1617.90,362.70) rotate(180)" font-family="Liberation Sans" font-weight="bold" font-size="18" fill="#000" stroke="#000" stroke-width="0.7"><text x="0.00" y="6.5" text-anchor="middle">4</text></g><g transform="translate(1679.30,222.70)" font-family="Liberation Sans" font-weight="bold" font-size="18" fill="#000" stroke="#000" stroke-width="0.7"><path transform="translate(-10.60,6.5)" d="M5.3 -12.7 L8.3 -12.7 L8.3 -0.3 L5.3 -0.3 L5.3 -9.0 L3.0 -7.9 L1.8 -9.6 Z"/><text x="5.30" y="6.5" text-anchor="middle">7</text></g><g transform="translate(1679.30,362.70) rotate(180)" font-family="Liberation Sans" font-weight="bold" font-size="18" fill="#000" stroke="#000" stroke-width="0.7"><text x="0.00" y="6.5" text-anchor="middle">3</text></g><g transform="translate(1740.70,222.70)" font-family="Liberation Sans" font-weight="bold" font-size="18" fill="#000" stroke="#000" stroke-width="0.7"><path transform="translate(-10.60,6.5)" d="M5.3 -12.7 L8.3 -12.7 L8.3 -0.3 L5.3 -0.3 L5.3 -9.0 L3.0 -7.9 L1.8 -9.6 Z"/><text x="5.30" y="6.5" text-anchor="middle">8</text></g><g transform="translate(1740.70,362.70) rotate(180)" font-family="Liberation Sans" font-weight="bold" font-size="18" fill="#000" stroke="#000" stroke-width="0.7"><text x="0.00" y="6.5" text-anchor="middle">2</text></g><g transform="translate(1802.10,222.70)" font-family="Liberation Sans" font-weight="bold" font-size="18" fill="#000" stroke="#000" stroke-width="0.7"><path transform="translate(-10.60,6.5)" d="M5.3 -12.7 L8.3 -12.7 L8.3 -0.3 L5.3 -0.3 L5.3 -9.0 L3.0 -7.9 L1.8 -9.6 Z"/><text x="5.30" y="6.5" text-anchor="middle">9</text></g><g transform="translate(1802.10,362.70) rotate(180)" font-family="Liberation Sans" font-weight="bold" font-size="18" fill="#000" stroke="#000" stroke-width="0.7"><path transform="translate(-5.30,6.5)" d="M5.3 -12.7 L8.3 -12.7 L8.3 -0.3 L5.3 -0.3 L5.3 -9.0 L3.0 -7.9 L1.8 -9.6 Z"/></g><g transform="translate(1863.50,222.70)" font-family="Liberation Sans" font-weight="bold" font-size="18" fill="#000" stroke="#000" stroke-width="0.7"><text x="-5.30" y="6.5" text-anchor="middle">2</text><text x="5.30" y="6.5" text-anchor="middle">0</text></g><g transform="translate(1863.50,362.70) rotate(180)" font-family="Liberation Sans" font-weight="bold" font-size="18" fill="#000" stroke="#000" stroke-width="0.7"><text x="0.00" y="6.5" text-anchor="middle">0</text></g></g><rect x="695.5" y="717.5" width="1109" height="211" fill="none" stroke="#fff" stroke-width="1.2"/><rect x="720.30" y="717.5" width="3.4" height="32.5" fill="none" stroke="#fff" stroke-width="1.1"/><rect x="746.70" y="717.5" width="3.4" height="26.5" fill="none" stroke="#fff" stroke-width="1.1"/><rect x="773.10" y="717.5" width="3.4" height="32.5" fill="none" stroke="#fff" stroke-width="1.1"/><rect x="799.50" y="717.5" width="3.4" height="26.5" fill="none" stroke="#fff" stroke-width="1.1"/><rect x="825.90" y="717.5" width="3.4" height="32.5" fill="none" stroke="#fff" stroke-width="1.1"/><rect x="852.30" y="717.5" width="3.4" height="26.5" fill="none" stroke="#fff" stroke-width="1.1"/><rect x="878.70" y="717.5" width="3.4" height="32.5" fill="none" stroke="#fff" stroke-width="1.1"/><rect x="905.10" y="717.5" width="3.4" height="26.5" fill="none" stroke="#fff" stroke-width="1.1"/><rect x="931.50" y="717.5" width="3.4" height="32.5" fill="none" stroke="#fff" stroke-width="1.1"/><rect x="957.90" y="717.5" width="3.4" height="26.5" fill="none" stroke="#fff" stroke-width="1.1"/><rect x="984.30" y="717.5" width="3.4" height="32.5" fill="none" stroke="#fff" stroke-width="1.1"/><rect x="1010.70" y="717.5" width="3.4" height="26.5" fill="none" stroke="#fff" stroke-width="1.1"/><rect x="1037.10" y="717.5" width="3.4" height="32.5" fill="none" stroke="#fff" stroke-width="1.1"/><rect x="1063.50" y="717.5" width="3.4" height="26.5" fill="none" stroke="#fff" stroke-width="1.1"/><rect x="1089.90" y="717.5" width="3.4" height="32.5" fill="none" stroke="#fff" stroke-width="1.1"/><rect x="1116.30" y="717.5" width="3.4" height="26.5" fill="none" stroke="#fff" stroke-width="1.1"/><rect x="1142.70" y="717.5" width="3.4" height="32.5" fill="none" stroke="#fff" stroke-width="1.1"/><rect x="1169.10" y="717.5" width="3.4" height="26.5" fill="none" stroke="#fff" stroke-width="1.1"/><rect x="1195.50" y="717.5" width="3.4" height="32.5" fill="none" stroke="#fff" stroke-width="1.1"/><rect x="1221.90" y="717.5" width="3.4" height="26.5" fill="none" stroke="#fff" stroke-width="1.1"/><rect x="1248.30" y="717.5" width="3.4" height="32.5" fill="none" stroke="#fff" stroke-width="1.1"/><rect x="1274.70" y="717.5" width="3.4" height="26.5" fill="none" stroke="#fff" stroke-width="1.1"/><rect x="1301.10" y="717.5" width="3.4" height="32.5" fill="none" stroke="#fff" stroke-width="1.1"/><rect x="1327.50" y="717.5" width="3.4" height="26.5" fill="none" stroke="#fff" stroke-width="1.1"/><rect x="1353.90" y="717.5" width="3.4" height="32.5" fill="none" stroke="#fff" stroke-width="1.1"/><rect x="1380.30" y="717.5" width="3.4" height="26.5" fill="none" stroke="#fff" stroke-width="1.1"/><rect x="1406.70" y="717.5" width="3.4" height="32.5" fill="none" stroke="#fff" stroke-width="1.1"/><rect x="1433.10" y="717.5" width="3.4" height="26.5" fill="none" stroke="#fff" stroke-width="1.1"/><rect x="1459.50" y="717.5" width="3.4" height="32.5" fill="none" stroke="#fff" stroke-width="1.1"/><rect x="1485.90" y="717.5" width="3.4" height="26.5" fill="none" stroke="#fff" stroke-width="1.1"/><rect x="1512.30" y="717.5" width="3.4" height="32.5" fill="none" stroke="#fff" stroke-width="1.1"/><rect x="1538.70" y="717.5" width="3.4" height="26.5" fill="none" stroke="#fff" stroke-width="1.1"/><rect x="1565.10" y="717.5" width="3.4" height="32.5" fill="none" stroke="#fff" stroke-width="1.1"/><rect x="1591.50" y="717.5" width="3.4" height="26.5" fill="none" stroke="#fff" stroke-width="1.1"/><rect x="1617.90" y="717.5" width="3.4" height="32.5" fill="none" stroke="#fff" stroke-width="1.1"/><rect x="1644.30" y="717.5" width="3.4" height="26.5" fill="none" stroke="#fff" stroke-width="1.1"/><rect x="1670.70" y="717.5" width="3.4" height="32.5" fill="none" stroke="#fff" stroke-width="1.1"/><rect x="1697.10" y="717.5" width="3.4" height="26.5" fill="none" stroke="#fff" stroke-width="1.1"/><rect x="1723.50" y="717.5" width="3.4" height="32.5" fill="none" stroke="#fff" stroke-width="1.1"/><rect x="1749.90" y="717.5" width="3.4" height="26.5" fill="none" stroke="#fff" stroke-width="1.1"/><rect x="1776.30" y="717.5" width="3.4" height="32.5" fill="none" stroke="#fff" stroke-width="1.1"/><rect x="720.30" y="896" width="3.4" height="32.5" fill="none" stroke="#fff" stroke-width="1.1"/><rect x="733.50" y="902" width="3.4" height="26.5" fill="none" stroke="#fff" stroke-width="1.1"/><rect x="746.70" y="902" width="3.4" height="26.5" fill="none" stroke="#fff" stroke-width="1.1"/><rect x="759.90" y="902" width="3.4" height="26.5" fill="none" stroke="#fff" stroke-width="1.1"/><rect x="773.10" y="896" width="3.4" height="32.5" fill="none" stroke="#fff" stroke-width="1.1"/><rect x="786.30" y="902" width="3.4" height="26.5" fill="none" stroke="#fff" stroke-width="1.1"/><rect x="799.50" y="902" width="3.4" height="26.5" fill="none" stroke="#fff" stroke-width="1.1"/><rect x="812.70" y="902" width="3.4" height="26.5" fill="none" stroke="#fff" stroke-width="1.1"/><rect x="825.90" y="896" width="3.4" height="32.5" fill="none" stroke="#fff" stroke-width="1.1"/><rect x="839.10" y="902" width="3.4" height="26.5" fill="none" stroke="#fff" stroke-width="1.1"/><rect x="852.30" y="902" width="3.4" height="26.5" fill="none" stroke="#fff" stroke-width="1.1"/><rect x="865.50" y="902" width="3.4" height="26.5" fill="none" stroke="#fff" stroke-width="1.1"/><rect x="878.70" y="896" width="3.4" height="32.5" fill="none" stroke="#fff" stroke-width="1.1"/><rect x="891.90" y="902" width="3.4" height="26.5" fill="none" stroke="#fff" stroke-width="1.1"/><rect x="905.10" y="902" width="3.4" height="26.5" fill="none" stroke="#fff" stroke-width="1.1"/><rect x="918.30" y="902" width="3.4" height="26.5" fill="none" stroke="#fff" stroke-width="1.1"/><rect x="931.50" y="896" width="3.4" height="32.5" fill="none" stroke="#fff" stroke-width="1.1"/><rect x="944.70" y="902" width="3.4" height="26.5" fill="none" stroke="#fff" stroke-width="1.1"/><rect x="957.90" y="902" width="3.4" height="26.5" fill="none" stroke="#fff" stroke-width="1.1"/><rect x="971.10" y="902" width="3.4" height="26.5" fill="none" stroke="#fff" stroke-width="1.1"/><rect x="984.30" y="896" width="3.4" height="32.5" fill="none" stroke="#fff" stroke-width="1.1"/><rect x="997.50" y="902" width="3.4" height="26.5" fill="none" stroke="#fff" stroke-width="1.1"/><rect x="1010.70" y="902" width="3.4" height="26.5" fill="none" stroke="#fff" stroke-width="1.1"/><rect x="1023.90" y="902" width="3.4" height="26.5" fill="none" stroke="#fff" stroke-width="1.1"/><rect x="1037.10" y="896" width="3.4" height="32.5" fill="none" stroke="#fff" stroke-width="1.1"/><rect x="1050.30" y="902" width="3.4" height="26.5" fill="none" stroke="#fff" stroke-width="1.1"/><rect x="1063.50" y="902" width="3.4" height="26.5" fill="none" stroke="#fff" stroke-width="1.1"/><rect x="1076.70" y="902" width="3.4" height="26.5" fill="none" stroke="#fff" stroke-width="1.1"/><rect x="1089.90" y="896" width="3.4" height="32.5" fill="none" stroke="#fff" stroke-width="1.1"/><rect x="1103.10" y="902" width="3.4" height="26.5" fill="none" stroke="#fff" stroke-width="1.1"/><rect x="1116.30" y="902" width="3.4" height="26.5" fill="none" stroke="#fff" stroke-width="1.1"/><rect x="1129.50" y="902" width="3.4" height="26.5" fill="none" stroke="#fff" stroke-width="1.1"/><rect x="1142.70" y="896" width="3.4" height="32.5" fill="none" stroke="#fff" stroke-width="1.1"/><rect x="1155.90" y="902" width="3.4" height="26.5" fill="none" stroke="#fff" stroke-width="1.1"/><rect x="1169.10" y="902" width="3.4" height="26.5" fill="none" stroke="#fff" stroke-width="1.1"/><rect x="1182.30" y="902" width="3.4" height="26.5" fill="none" stroke="#fff" stroke-width="1.1"/><rect x="1195.50" y="896" width="3.4" height="32.5" fill="none" stroke="#fff" stroke-width="1.1"/><rect x="1208.70" y="902" width="3.4" height="26.5" fill="none" stroke="#fff" stroke-width="1.1"/><rect x="1221.90" y="902" width="3.4" height="26.5" fill="none" stroke="#fff" stroke-width="1.1"/><rect x="1235.10" y="902" width="3.4" height="26.5" fill="none" stroke="#fff" stroke-width="1.1"/><rect x="1248.30" y="896" width="3.4" height="32.5" fill="none" stroke="#fff" stroke-width="1.1"/><rect x="1261.50" y="902" width="3.4" height="26.5" fill="none" stroke="#fff" stroke-width="1.1"/><rect x="1274.70" y="902" width="3.4" height="26.5" fill="none" stroke="#fff" stroke-width="1.1"/><rect x="1287.90" y="902" width="3.4" height="26.5" fill="none" stroke="#fff" stroke-width="1.1"/><rect x="1301.10" y="896" width="3.4" height="32.5" fill="none" stroke="#fff" stroke-width="1.1"/><rect x="1314.30" y="902" width="3.4" height="26.5" fill="none" stroke="#fff" stroke-width="1.1"/><rect x="1327.50" y="902" width="3.4" height="26.5" fill="none" stroke="#fff" stroke-width="1.1"/><rect x="1340.70" y="902" width="3.4" height="26.5" fill="none" stroke="#fff" stroke-width="1.1"/><rect x="1353.90" y="896" width="3.4" height="32.5" fill="none" stroke="#fff" stroke-width="1.1"/><rect x="1367.10" y="902" width="3.4" height="26.5" fill="none" stroke="#fff" stroke-width="1.1"/><rect x="1380.30" y="902" width="3.4" height="26.5" fill="none" stroke="#fff" stroke-width="1.1"/><rect x="1393.50" y="902" width="3.4" height="26.5" fill="none" stroke="#fff" stroke-width="1.1"/><rect x="1406.70" y="896" width="3.4" height="32.5" fill="none" stroke="#fff" stroke-width="1.1"/><rect x="1419.90" y="902" width="3.4" height="26.5" fill="none" stroke="#fff" stroke-width="1.1"/><rect x="1433.10" y="902" width="3.4" height="26.5" fill="none" stroke="#fff" stroke-width="1.1"/><rect x="1446.30" y="902" width="3.4" height="26.5" fill="none" stroke="#fff" stroke-width="1.1"/><rect x="1459.50" y="896" width="3.4" height="32.5" fill="none" stroke="#fff" stroke-width="1.1"/><rect x="1472.70" y="902" width="3.4" height="26.5" fill="none" stroke="#fff" stroke-width="1.1"/><rect x="1485.90" y="902" width="3.4" height="26.5" fill="none" stroke="#fff" stroke-width="1.1"/><rect x="1499.10" y="902" width="3.4" height="26.5" fill="none" stroke="#fff" stroke-width="1.1"/><rect x="1512.30" y="896" width="3.4" height="32.5" fill="none" stroke="#fff" stroke-width="1.1"/><rect x="1525.50" y="902" width="3.4" height="26.5" fill="none" stroke="#fff" stroke-width="1.1"/><rect x="1538.70" y="902" width="3.4" height="26.5" fill="none" stroke="#fff" stroke-width="1.1"/><rect x="1551.90" y="902" width="3.4" height="26.5" fill="none" stroke="#fff" stroke-width="1.1"/><rect x="1565.10" y="896" width="3.4" height="32.5" fill="none" stroke="#fff" stroke-width="1.1"/><rect x="1578.30" y="902" width="3.4" height="26.5" fill="none" stroke="#fff" stroke-width="1.1"/><rect x="1591.50" y="902" width="3.4" height="26.5" fill="none" stroke="#fff" stroke-width="1.1"/><rect x="1604.70" y="902" width="3.4" height="26.5" fill="none" stroke="#fff" stroke-width="1.1"/><rect x="1617.90" y="896" width="3.4" height="32.5" fill="none" stroke="#fff" stroke-width="1.1"/><rect x="1631.10" y="902" width="3.4" height="26.5" fill="none" stroke="#fff" stroke-width="1.1"/><rect x="1644.30" y="902" width="3.4" height="26.5" fill="none" stroke="#fff" stroke-width="1.1"/><rect x="1657.50" y="902" width="3.4" height="26.5" fill="none" stroke="#fff" stroke-width="1.1"/><rect x="1670.70" y="896" width="3.4" height="32.5" fill="none" stroke="#fff" stroke-width="1.1"/><rect x="1683.90" y="902" width="3.4" height="26.5" fill="none" stroke="#fff" stroke-width="1.1"/><rect x="1697.10" y="902" width="3.4" height="26.5" fill="none" stroke="#fff" stroke-width="1.1"/><rect x="1710.30" y="902" width="3.4" height="26.5" fill="none" stroke="#fff" stroke-width="1.1"/><rect x="1723.50" y="896" width="3.4" height="32.5" fill="none" stroke="#fff" stroke-width="1.1"/><rect x="1736.70" y="902" width="3.4" height="26.5" fill="none" stroke="#fff" stroke-width="1.1"/><rect x="1749.90" y="902" width="3.4" height="26.5" fill="none" stroke="#fff" stroke-width="1.1"/><rect x="1763.10" y="902" width="3.4" height="26.5" fill="none" stroke="#fff" stroke-width="1.1"/><rect x="1776.30" y="896" width="3.4" height="32.5" fill="none" stroke="#fff" stroke-width="1.1"/><g transform="translate(722.00,762.20) scale(0.92)" font-family="Liberation Sans" font-weight="bold" font-size="18" fill="none" stroke="#fff" stroke-width="1.75"><text x="0.00" y="6.5" text-anchor="middle">0</text></g><g transform="translate(722.00,882.70) rotate(180) scale(0.92)" font-family="Liberation Sans" font-weight="bold" font-size="18" fill="none" stroke="#fff" stroke-width="1.75"><text x="-5.30" y="6.5" text-anchor="middle">2</text><text x="5.30" y="6.5" text-anchor="middle">0</text></g><g transform="translate(774.80,762.20) scale(0.92)" font-family="Liberation Sans" font-weight="bold" font-size="18" fill="none" stroke="#fff" stroke-width="1.75"><path transform="translate(-5.30,6.5)" d="M5.3 -12.7 L8.3 -12.7 L8.3 -0.3 L5.3 -0.3 L5.3 -9.0 L3.0 -7.9 L1.8 -9.6 Z"/></g><g transform="translate(774.80,882.70) rotate(180) scale(0.92)" font-family="Liberation Sans" font-weight="bold" font-size="18" fill="none" stroke="#fff" stroke-width="1.75"><path transform="translate(-10.60,6.5)" d="M5.3 -12.7 L8.3 -12.7 L8.3 -0.3 L5.3 -0.3 L5.3 -9.0 L3.0 -7.9 L1.8 -9.6 Z"/><text x="5.30" y="6.5" text-anchor="middle">9</text></g><g transform="translate(827.60,762.20) scale(0.92)" font-family="Liberation Sans" font-weight="bold" font-size="18" fill="none" stroke="#fff" stroke-width="1.75"><text x="0.00" y="6.5" text-anchor="middle">2</text></g><g transform="translate(827.60,882.70) rotate(180) scale(0.92)" font-family="Liberation Sans" font-weight="bold" font-size="18" fill="none" stroke="#fff" stroke-width="1.75"><path transform="translate(-10.60,6.5)" d="M5.3 -12.7 L8.3 -12.7 L8.3 -0.3 L5.3 -0.3 L5.3 -9.0 L3.0 -7.9 L1.8 -9.6 Z"/><text x="5.30" y="6.5" text-anchor="middle">8</text></g><g transform="translate(880.40,762.20) scale(0.92)" font-family="Liberation Sans" font-weight="bold" font-size="18" fill="none" stroke="#fff" stroke-width="1.75"><text x="0.00" y="6.5" text-anchor="middle">3</text></g><g transform="translate(880.40,882.70) rotate(180) scale(0.92)" font-family="Liberation Sans" font-weight="bold" font-size="18" fill="none" stroke="#fff" stroke-width="1.75"><path transform="translate(-10.60,6.5)" d="M5.3 -12.7 L8.3 -12.7 L8.3 -0.3 L5.3 -0.3 L5.3 -9.0 L3.0 -7.9 L1.8 -9.6 Z"/><text x="5.30" y="6.5" text-anchor="middle">7</text></g><g transform="translate(933.20,762.20) scale(0.92)" font-family="Liberation Sans" font-weight="bold" font-size="18" fill="none" stroke="#fff" stroke-width="1.75"><text x="0.00" y="6.5" text-anchor="middle">4</text></g><g transform="translate(933.20,882.70) rotate(180) scale(0.92)" font-family="Liberation Sans" font-weight="bold" font-size="18" fill="none" stroke="#fff" stroke-width="1.75"><path transform="translate(-10.60,6.5)" d="M5.3 -12.7 L8.3 -12.7 L8.3 -0.3 L5.3 -0.3 L5.3 -9.0 L3.0 -7.9 L1.8 -9.6 Z"/><text x="5.30" y="6.5" text-anchor="middle">6</text></g><g transform="translate(986.00,762.20) scale(0.92)" font-family="Liberation Sans" font-weight="bold" font-size="18" fill="none" stroke="#fff" stroke-width="1.75"><text x="0.00" y="6.5" text-anchor="middle">5</text></g><g transform="translate(986.00,882.70) rotate(180) scale(0.92)" font-family="Liberation Sans" font-weight="bold" font-size="18" fill="none" stroke="#fff" stroke-width="1.75"><path transform="translate(-10.60,6.5)" d="M5.3 -12.7 L8.3 -12.7 L8.3 -0.3 L5.3 -0.3 L5.3 -9.0 L3.0 -7.9 L1.8 -9.6 Z"/><text x="5.30" y="6.5" text-anchor="middle">5</text></g><g transform="translate(1038.80,762.20) scale(0.92)" font-family="Liberation Sans" font-weight="bold" font-size="18" fill="none" stroke="#fff" stroke-width="1.75"><text x="0.00" y="6.5" text-anchor="middle">6</text></g><g transform="translate(1038.80,882.70) rotate(180) scale(0.92)" font-family="Liberation Sans" font-weight="bold" font-size="18" fill="none" stroke="#fff" stroke-width="1.75"><path transform="translate(-10.60,6.5)" d="M5.3 -12.7 L8.3 -12.7 L8.3 -0.3 L5.3 -0.3 L5.3 -9.0 L3.0 -7.9 L1.8 -9.6 Z"/><text x="5.30" y="6.5" text-anchor="middle">4</text></g><g transform="translate(1091.60,762.20) scale(0.92)" font-family="Liberation Sans" font-weight="bold" font-size="18" fill="none" stroke="#fff" stroke-width="1.75"><text x="0.00" y="6.5" text-anchor="middle">7</text></g><g transform="translate(1091.60,882.70) rotate(180) scale(0.92)" font-family="Liberation Sans" font-weight="bold" font-size="18" fill="none" stroke="#fff" stroke-width="1.75"><path transform="translate(-10.60,6.5)" d="M5.3 -12.7 L8.3 -12.7 L8.3 -0.3 L5.3 -0.3 L5.3 -9.0 L3.0 -7.9 L1.8 -9.6 Z"/><text x="5.30" y="6.5" text-anchor="middle">3</text></g><g transform="translate(1144.40,762.20) scale(0.92)" font-family="Liberation Sans" font-weight="bold" font-size="18" fill="none" stroke="#fff" stroke-width="1.75"><text x="0.00" y="6.5" text-anchor="middle">8</text></g><g transform="translate(1144.40,882.70) rotate(180) scale(0.92)" font-family="Liberation Sans" font-weight="bold" font-size="18" fill="none" stroke="#fff" stroke-width="1.75"><path transform="translate(-10.60,6.5)" d="M5.3 -12.7 L8.3 -12.7 L8.3 -0.3 L5.3 -0.3 L5.3 -9.0 L3.0 -7.9 L1.8 -9.6 Z"/><text x="5.30" y="6.5" text-anchor="middle">2</text></g><g transform="translate(1197.20,762.20) scale(0.92)" font-family="Liberation Sans" font-weight="bold" font-size="18" fill="none" stroke="#fff" stroke-width="1.75"><text x="0.00" y="6.5" text-anchor="middle">9</text></g><g transform="translate(1197.20,882.70) rotate(180) scale(0.92)" font-family="Liberation Sans" font-weight="bold" font-size="18" fill="none" stroke="#fff" stroke-width="1.75"><path transform="translate(-10.60,6.5)" d="M5.3 -12.7 L8.3 -12.7 L8.3 -0.3 L5.3 -0.3 L5.3 -9.0 L3.0 -7.9 L1.8 -9.6 Z"/><path transform="translate(0.00,6.5)" d="M5.3 -12.7 L8.3 -12.7 L8.3 -0.3 L5.3 -0.3 L5.3 -9.0 L3.0 -7.9 L1.8 -9.6 Z"/></g><g transform="translate(1250.00,762.20) scale(0.92)" font-family="Liberation Sans" font-weight="bold" font-size="18" fill="none" stroke="#fff" stroke-width="1.75"><path transform="translate(-10.60,6.5)" d="M5.3 -12.7 L8.3 -12.7 L8.3 -0.3 L5.3 -0.3 L5.3 -9.0 L3.0 -7.9 L1.8 -9.6 Z"/><text x="5.30" y="6.5" text-anchor="middle">0</text></g><g transform="translate(1250.00,882.70) rotate(180) scale(0.92)" font-family="Liberation Sans" font-weight="bold" font-size="18" fill="none" stroke="#fff" stroke-width="1.75"><path transform="translate(-10.60,6.5)" d="M5.3 -12.7 L8.3 -12.7 L8.3 -0.3 L5.3 -0.3 L5.3 -9.0 L3.0 -7.9 L1.8 -9.6 Z"/><text x="5.30" y="6.5" text-anchor="middle">0</text></g><g transform="translate(1302.80,762.20) scale(0.92)" font-family="Liberation Sans" font-weight="bold" font-size="18" fill="none" stroke="#fff" stroke-width="1.75"><path transform="translate(-10.60,6.5)" d="M5.3 -12.7 L8.3 -12.7 L8.3 -0.3 L5.3 -0.3 L5.3 -9.0 L3.0 -7.9 L1.8 -9.6 Z"/><path transform="translate(0.00,6.5)" d="M5.3 -12.7 L8.3 -12.7 L8.3 -0.3 L5.3 -0.3 L5.3 -9.0 L3.0 -7.9 L1.8 -9.6 Z"/></g><g transform="translate(1302.80,882.70) rotate(180) scale(0.92)" font-family="Liberation Sans" font-weight="bold" font-size="18" fill="none" stroke="#fff" stroke-width="1.75"><text x="0.00" y="6.5" text-anchor="middle">9</text></g><g transform="translate(1355.60,762.20) scale(0.92)" font-family="Liberation Sans" font-weight="bold" font-size="18" fill="none" stroke="#fff" stroke-width="1.75"><path transform="translate(-10.60,6.5)" d="M5.3 -12.7 L8.3 -12.7 L8.3 -0.3 L5.3 -0.3 L5.3 -9.0 L3.0 -7.9 L1.8 -9.6 Z"/><text x="5.30" y="6.5" text-anchor="middle">2</text></g><g transform="translate(1355.60,882.70) rotate(180) scale(0.92)" font-family="Liberation Sans" font-weight="bold" font-size="18" fill="none" stroke="#fff" stroke-width="1.75"><text x="0.00" y="6.5" text-anchor="middle">8</text></g><g transform="translate(1408.40,762.20) scale(0.92)" font-family="Liberation Sans" font-weight="bold" font-size="18" fill="none" stroke="#fff" stroke-width="1.75"><path transform="translate(-10.60,6.5)" d="M5.3 -12.7 L8.3 -12.7 L8.3 -0.3 L5.3 -0.3 L5.3 -9.0 L3.0 -7.9 L1.8 -9.6 Z"/><text x="5.30" y="6.5" text-anchor="middle">3</text></g><g transform="translate(1408.40,882.70) rotate(180) scale(0.92)" font-family="Liberation Sans" font-weight="bold" font-size="18" fill="none" stroke="#fff" stroke-width="1.75"><text x="0.00" y="6.5" text-anchor="middle">7</text></g><g transform="translate(1461.20,762.20) scale(0.92)" font-family="Liberation Sans" font-weight="bold" font-size="18" fill="none" stroke="#fff" stroke-width="1.75"><path transform="translate(-10.60,6.5)" d="M5.3 -12.7 L8.3 -12.7 L8.3 -0.3 L5.3 -0.3 L5.3 -9.0 L3.0 -7.9 L1.8 -9.6 Z"/><text x="5.30" y="6.5" text-anchor="middle">4</text></g><g transform="translate(1461.20,882.70) rotate(180) scale(0.92)" font-family="Liberation Sans" font-weight="bold" font-size="18" fill="none" stroke="#fff" stroke-width="1.75"><text x="0.00" y="6.5" text-anchor="middle">6</text></g><g transform="translate(1514.00,762.20) scale(0.92)" font-family="Liberation Sans" font-weight="bold" font-size="18" fill="none" stroke="#fff" stroke-width="1.75"><path transform="translate(-10.60,6.5)" d="M5.3 -12.7 L8.3 -12.7 L8.3 -0.3 L5.3 -0.3 L5.3 -9.0 L3.0 -7.9 L1.8 -9.6 Z"/><text x="5.30" y="6.5" text-anchor="middle">5</text></g><g transform="translate(1514.00,882.70) rotate(180) scale(0.92)" font-family="Liberation Sans" font-weight="bold" font-size="18" fill="none" stroke="#fff" stroke-width="1.75"><text x="0.00" y="6.5" text-anchor="middle">5</text></g><g transform="translate(1566.80,762.20) scale(0.92)" font-family="Liberation Sans" font-weight="bold" font-size="18" fill="none" stroke="#fff" stroke-width="1.75"><path transform="translate(-10.60,6.5)" d="M5.3 -12.7 L8.3 -12.7 L8.3 -0.3 L5.3 -0.3 L5.3 -9.0 L3.0 -7.9 L1.8 -9.6 Z"/><text x="5.30" y="6.5" text-anchor="middle">6</text></g><g transform="translate(1566.80,882.70) rotate(180) scale(0.92)" font-family="Liberation Sans" font-weight="bold" font-size="18" fill="none" stroke="#fff" stroke-width="1.75"><text x="0.00" y="6.5" text-anchor="middle">4</text></g><g transform="translate(1619.60,762.20) scale(0.92)" font-family="Liberation Sans" font-weight="bold" font-size="18" fill="none" stroke="#fff" stroke-width="1.75"><path transform="translate(-10.60,6.5)" d="M5.3 -12.7 L8.3 -12.7 L8.3 -0.3 L5.3 -0.3 L5.3 -9.0 L3.0 -7.9 L1.8 -9.6 Z"/><text x="5.30" y="6.5" text-anchor="middle">7</text></g><g transform="translate(1619.60,882.70) rotate(180) scale(0.92)" font-family="Liberation Sans" font-weight="bold" font-size="18" fill="none" stroke="#fff" stroke-width="1.75"><text x="0.00" y="6.5" text-anchor="middle">3</text></g><g transform="translate(1672.40,762.20) scale(0.92)" font-family="Liberation Sans" font-weight="bold" font-size="18" fill="none" stroke="#fff" stroke-width="1.75"><path transform="translate(-10.60,6.5)" d="M5.3 -12.7 L8.3 -12.7 L8.3 -0.3 L5.3 -0.3 L5.3 -9.0 L3.0 -7.9 L1.8 -9.6 Z"/><text x="5.30" y="6.5" text-anchor="middle">8</text></g><g transform="translate(1672.40,882.70) rotate(180) scale(0.92)" font-family="Liberation Sans" font-weight="bold" font-size="18" fill="none" stroke="#fff" stroke-width="1.75"><text x="0.00" y="6.5" text-anchor="middle">2</text></g><g transform="translate(1725.20,762.20) scale(0.92)" font-family="Liberation Sans" font-weight="bold" font-size="18" fill="none" stroke="#fff" stroke-width="1.75"><path transform="translate(-10.60,6.5)" d="M5.3 -12.7 L8.3 -12.7 L8.3 -0.3 L5.3 -0.3 L5.3 -9.0 L3.0 -7.9 L1.8 -9.6 Z"/><text x="5.30" y="6.5" text-anchor="middle">9</text></g><g transform="translate(1725.20,882.70) rotate(180) scale(0.92)" font-family="Liberation Sans" font-weight="bold" font-size="18" fill="none" stroke="#fff" stroke-width="1.75"><path transform="translate(-5.30,6.5)" d="M5.3 -12.7 L8.3 -12.7 L8.3 -0.3 L5.3 -0.3 L5.3 -9.0 L3.0 -7.9 L1.8 -9.6 Z"/></g><g transform="translate(1778.00,762.20) scale(0.92)" font-family="Liberation Sans" font-weight="bold" font-size="18" fill="none" stroke="#fff" stroke-width="1.75"><text x="-5.30" y="6.5" text-anchor="middle">2</text><text x="5.30" y="6.5" text-anchor="middle">0</text></g><g transform="translate(1778.00,882.70) rotate(180) scale(0.92)" font-family="Liberation Sans" font-weight="bold" font-size="18" fill="none" stroke="#fff" stroke-width="1.75"><text x="0.00" y="6.5" text-anchor="middle">0</text></g></svg>
</body></html>
